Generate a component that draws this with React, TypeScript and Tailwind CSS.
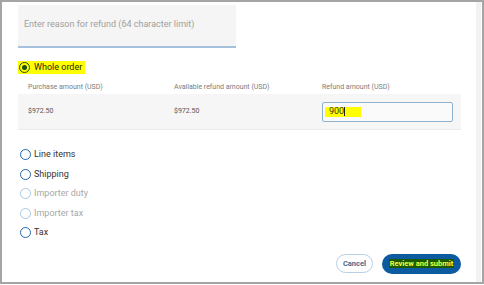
import React from "react";

const options = [
  { label: "Line items", disabled: false },
  { label: "Shipping", disabled: false },
  { label: "Importer duty", disabled: true },
  { label: "Importer tax", disabled: true },
  { label: "Tax", disabled: false },
];

function Radio({ disabled }: { disabled?: boolean }) {
  return (
    <span
      className={
        disabled
          ? "w-[11px] h-[11px] rounded-full border-[1.5px] border-[#a9c6e2] shrink-0"
          : "w-[11px] h-[11px] rounded-full border-[1.5px] border-[#2467ab] shrink-0"
      }
    />
  );
}

export default function App() {
  return (
    <div className="w-[484px] h-[284px] border-2 border-[#a5a5a5] bg-white flex font-['Roboto',sans-serif]">
      <div className="flex-1 flex flex-col pl-[16px]">
        {/* reason field */}
        <div className="mt-[3px] w-[218px] h-[43px] bg-[#f5f5f5] border-b-2 border-[#a6c1dc] pl-[6px] pt-[13px] text-[9px] text-[#a0a0a0]">
          Enter reason for refund (64 character limit)
        </div>

        {/* whole order */}
        <div className="mt-[13px] flex">
          <span className="h-[13px] bg-[#ffff00] flex items-center gap-[4px] pl-[1px] pr-[3px]">
            <span className="w-[11px] h-[11px] rounded-full border-[1.5px] border-[#1c4f10] flex items-center justify-center">
              <span className="w-[5px] h-[5px] rounded-full bg-[#1c4f10]" />
            </span>
            <span className="text-[9px] text-[#2a2a00]">Whole order</span>
          </span>
        </div>

        {/* table */}
        <div className="mt-[6px] h-[14px] w-[443px] grid grid-cols-[146px_148px_1fr] items-center pl-[10px] text-[7px] text-[#7c7c7c]">
          <span>Purchase amount (USD)</span>
          <span>Available refund amount (USD)</span>
          <span>Refund amount (USD)</span>
        </div>
        <div className="h-[36px] w-[443px] bg-[#f6f6f6] border-b border-[#ebebeb] grid grid-cols-[146px_148px_1fr] items-center pl-[10px] text-[7px] text-[#555555]">
          <span>$972.50</span>
          <span>$972.50</span>
          <div className="w-[131px] h-[20px] border border-[#8fb1d2] rounded-[2px] bg-[#fafafa] flex items-center pl-[2px]">
            <span className="h-[10px] bg-[#ffff00] flex items-center pl-[4px] pr-[16px] text-[9px] text-[#3a3a10]">
              900<span className="w-px h-[9px] bg-[#222222]" />
            </span>
          </div>
        </div>

        {/* other options */}
        <div className="mt-[15px] flex flex-col">
          {options.map((o) => (
            <div key={o.label} className="h-[19.5px] flex items-center gap-[3px] pl-[2px]">
              <Radio disabled={o.disabled} />
              <span className={o.disabled ? "text-[9px] text-[#a8a8a8]" : "text-[9px] text-[#333333]"}>
                {o.label}
              </span>
            </div>
          ))}
        </div>

        {/* actions */}
        <div className="mt-[11px] w-[443px] flex justify-end items-center gap-[9px]">
          <button className="w-[37px] h-[19px] rounded-full border border-[#b9cfe3] bg-white text-[7.5px] font-bold text-[#44698f]">
            Cancel
          </button>
          <button className="w-[79px] h-[20px] rounded-full bg-[#0c5aa0] flex items-center justify-center">
            <span className="bg-[#1a5a05] text-[7.5px] font-bold text-[#f4ff3a] leading-[9px] px-[1px]">
              Review and submit
            </span>
          </button>
        </div>
      </div>
      <div className="w-[5px] bg-[#f2f2f2] mr-[1px]" />
    </div>
  );
}
